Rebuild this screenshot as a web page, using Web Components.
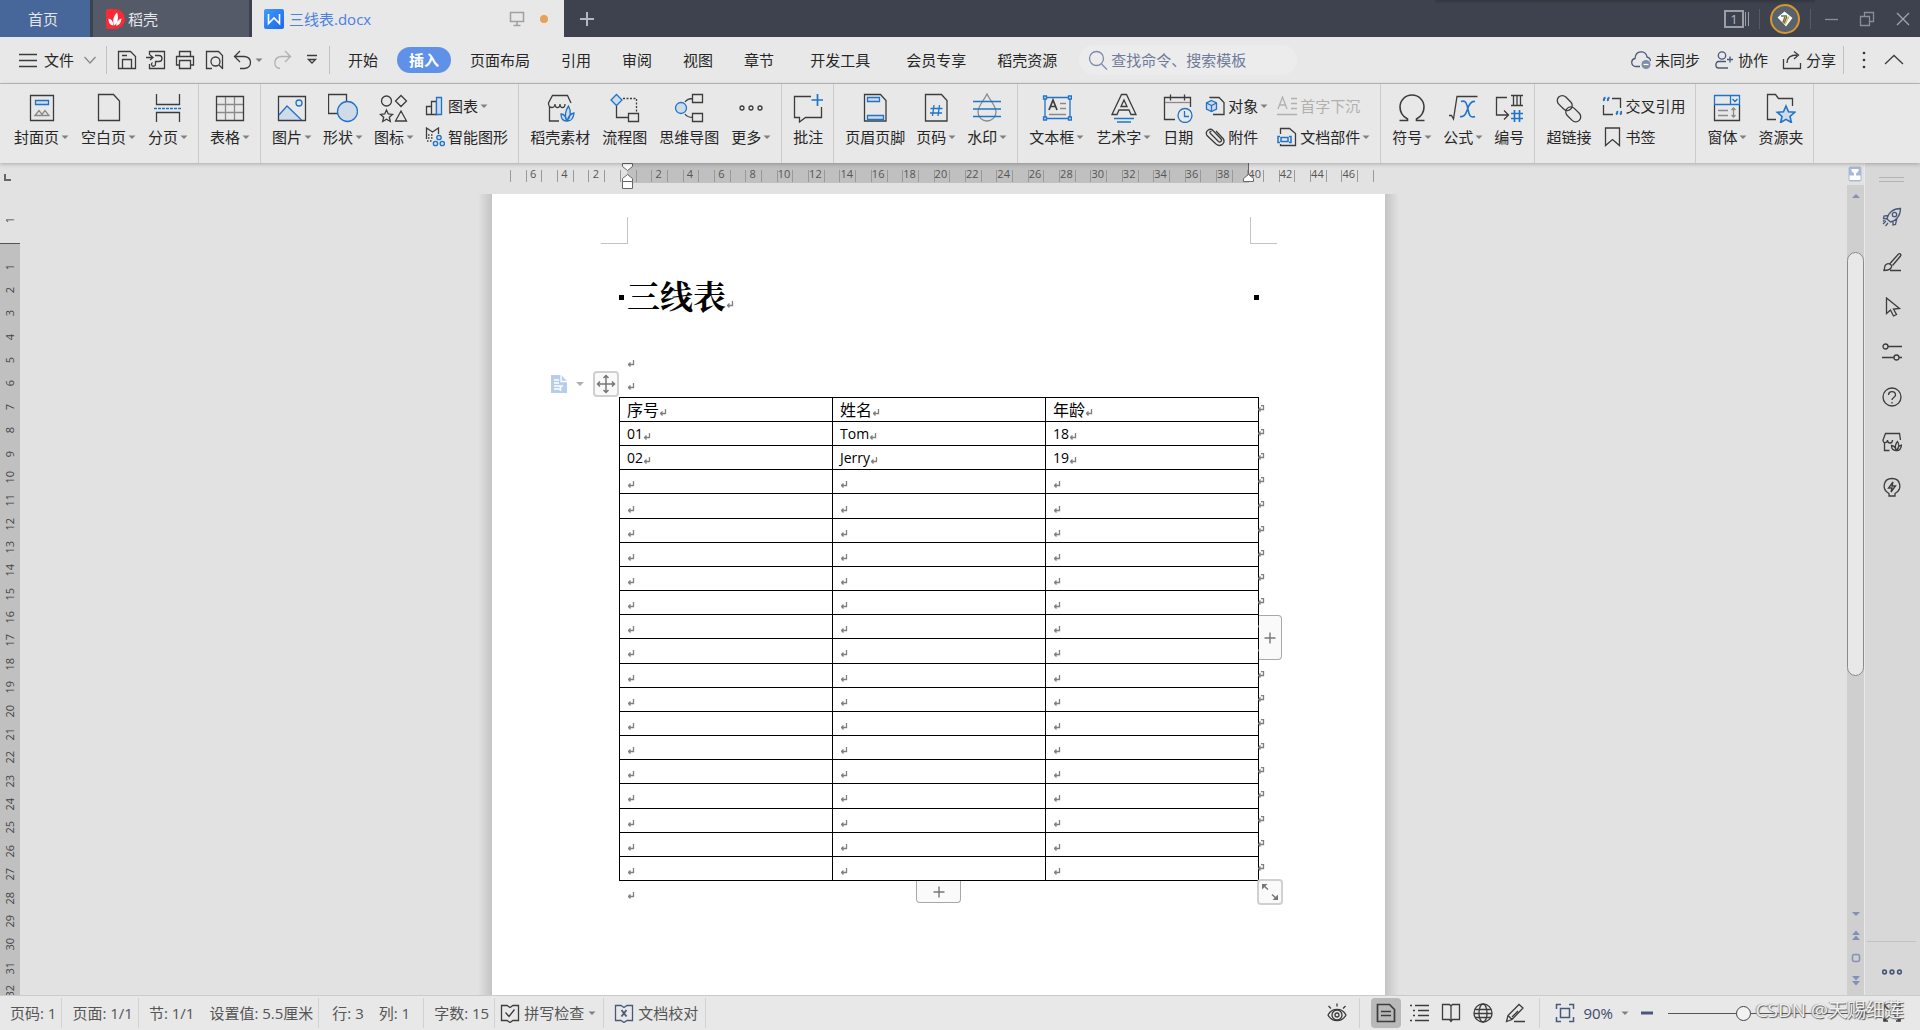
<!DOCTYPE html>
<html lang="zh-CN">
<head>
<meta charset="utf-8">
<title>三线表.docx</title>
<style>
  html, body { margin: 0; height: 100%; overflow: hidden; }
  body { font-family: "Open Sans", "Noto Sans CJK SC", sans-serif; font-size: 15px; line-height: 20px; color: #262626; background: #e2e2e2; }
</style>
</head>
<body>
<office-app></office-app>
<script>
const B = '#1f73c9', L = '#cfdbe8', N = '#4a5878';
/* name: [box size, markup] */
const ICONS = {
  cover: [30, `<path d="M3.5 2.5h23v25h-23z"/><path stroke="${B}" fill="${L}" d="M8.5 7.5h13v4h-13z"/><path stroke="#888" d="M8 22.5l4-5 3 4 3-4 4 5z"/>`],
  blank: [30, `<path d="M4.5 1.5h15l6 6.5v19.500h-21z"/>`],
  pbreak: [30, `<path d="M3.500 1v10.500h23V1M3.500 29V19.500h23V29"/><path stroke="${B}" stroke-dasharray="3 1" d="M1 15.500h28"/>`],
  table: [30, `<path stroke="#8a8a8a" d="M10.500 4v23M19.500 4v23M2 11.500h26M2 19.500h26"/><path d="M1.500 3.500h27v24h-27z"/>`],
  picture: [30, `<path fill="${L}" stroke="none" d="M2 22l8-9 14.500 14.500H2z"/><path d="M1.500 3.500h27v24h-27z"/><g stroke="${B}"><path d="M2 22l8-9 14.500 14"/><circle cx="22" cy="10" r="3"/></g>`],
  shapes: [30, `<path d="M.5 1.500h18v19h-18z"/><circle cx="19.500" cy="18.500" r="10" fill="${L}" stroke="${B}"/>`],
  glyphs: [30, `<circle cx="7.500" cy="8" r="5"/><path d="M22 2.500L27.500 8 22 13.500 16.500 8zM7.500 17l1.800 4 4.200.4-3.200 2.800 1 4.300-3.800-2.300-3.800 2.300 1-4.300-3.200-2.800 4.200-.4zM22 18l5.500 10h-11z"/>`],
  chart: [20, `<path d="M1.500 10.500h5v8h-5zM6.500 5.500h5v13h-5z"/><path stroke="${B}" fill="${L}" d="M11.500 1.500h5v17h-5z"/>`],
  smart: [20, `<path d="M1.500 12V1l6 4 6-4v6"/><path stroke-dasharray="1.500 1.500" d="M3 8h6M3 11h5M2 14h5"/><g stroke="${B}" fill="${L}"><circle cx="14" cy="10.500" r="2.200"/><circle cx="10.500" cy="16.500" r="2.200"/><circle cx="17.300" cy="16.500" r="2.200"/></g>`],
  store: [30, `<path d="M14 28H4.500V13M26 10L22.500 2.500h-15L3.500 10c0 3.500 1.500 4.500 3.200 4.500S10 13 10 11c0 2 1 3.500 2.500 3.500S15 13 15 11c0 2 1 3.500 2.500 3.500S20 13 20 11"/><path stroke="${B}" fill="${L}" d="M22 28c-3-4-1.500-11 1.500-15 3 5 2 12-1.500 15zM21.500 28c-4 0-5.500-3-5.500-7 3 0 5.500 3 5.500 7zM22.500 28c4 0 6-3 6.500-8-4 1-6 4-6.500 8z"/>`],
  flow: [30, `<path stroke="${B}" fill="${L}" d="M6.500 1.500L12 7 6.500 12.500 1 7z"/><path d="M6.500 13v11.500H18M18.500 20.500h10v8h-10z"/><path stroke-dasharray="2 1.500" d="M13 5.500h13.500V20"/>`],
  mind: [30, `<circle cx="7" cy="15" r="5.500" stroke="${B}" fill="${L}"/><path d="M11 9c2-3 4-3.500 8-3.500M11 21c2 3 4 3.500 8 3.500M18.500 1.500h10v8h-10zM18.500 20.500h10v8h-10z"/>`],
  more: [30, `<circle cx="6" cy="15" r="2"/><circle cx="15" cy="15" r="2"/><circle cx="24" cy="15" r="2"/>`],
  comment: [30, `<path d="M18 3.500H1.500v21h5V29l6-4.500h16V14"/><path stroke="${B}" stroke-width="1.700" d="M24.500 1v12M18.500 7h12"/>`],
  header: [30, `<path d="M4.500 1.500h16l5.500 6v20.500h-21.500z"/><path stroke="${B}" fill="${L}" d="M7.500 4.500h12v4h-12zM7.500 22.500h16v4h-16z"/>`],
  pagenum: [30, `<path d="M4.500 1.500h16l5.500 6v20.500h-21.500z"/><path stroke="${B}" d="M13 12l-1.500 11M18.500 12L17 23M9.500 15.500h12M9 20h12"/>`],
  watermark: [30, `<path stroke="#8a8a8a" d="M15 1c4 8 9 12 9 18a9 9 0 0 1-18 0C6 13 11 9 15 1z"/><path stroke="${B}" stroke-width="1.700" d="M1 8.500h28M1 16h28M1 23.500h28"/>`],
  textbox: [30, `<path stroke="${B}" d="M3 4.500h25v21H3z"/><path fill="${L}" stroke="${B}" d="M1.500 3h3v3h-3zM26.500 3h3v3h-3zM1.500 24h3v3h-3zM26.500 24h3v3h-3z"/><path stroke-width="1.700" d="M7 17l4-10 4 10M8.500 13.500h5"/><path stroke="#8a8a8a" d="M18 10.500h6M18 15.500h6M7 21.500h17"/>`],
  wordart: [30, `<path d="M3 21.500L12.500 1.500h5l9.500 20h-5l-2-4.500h-10l-2 4.500zM15 7l-3 6.500h6z"/><path stroke="${B}" d="M5 25.500h20M8 29h14"/>`],
  date: [30, `<path d="M12 26.500H1.500v-22h26V14M7.500 1.500v6M21.500 1.500v6"/><path stroke="#8a8a8a" d="M2 9.500h25"/><circle cx="22" cy="22.500" r="7" stroke="${B}"/><path stroke="${B}" d="M21.500 18v5.500H26"/>`],
  object: [20, `<path d="M5 2V1.500h9l5 5v12H8"/><g stroke="${B}"><path fill="${L}" d="M6.500 4.500l5 2.500v6l-5 2.500-5-2.500V7z"/><path d="M1.500 7l5 2.500 5-2.500M6.500 9.500v6"/></g>`],
  clip: [20, `<path d="M5 6l8.500 8.500c1.500 1.500 4-.5 2.500-2.500L8 3.500C5 .5-.5 4 2 8.500l9 8.500c5 4 10-1.500 7-5.500L11 4M5 6c-.5-1 .5-2 1.500-1.500"/>`],
  dropcap: [20, `<g stroke="#b0b0b0"><path d="M1 13L5.500 1 10 13M2.500 9h6M14 2.500h6M14 7.500h6M14 12.500h6M0 18.500h20"/></g>`],
  parts: [20, `<path d="M3.500 7V1.500h9l6 5v12h-15V17"/><path stroke="${B}" d="M3 9.500H1v6h2M12 9.500h2v6h-2M4 10.500h7v4H4z" stroke-width="1.500"/>`],
  omega: [30, `<path stroke-width="1.600" d="M2.500 27.500h8V26C6 23.500 3 19.500 3 14a12 12 0 0 1 24 0c0 5.500-3 9.500-7.500 12v1.500h8"/>`],
  formula: [30, `<path d="M1 22.500h2.500l2 3.500L9 3.500h20.500"/><path stroke="${B}" stroke-width="1.600" d="M13 8.500c5-2 6 3 7 8s2 9 7 7M27 8.500c-5-1-7 6-8 9s-3 7-7 6"/>`],
  number: [30, `<path d="M13 4.500H2.500V22H14M10 17.500l4.500 4.500-4.500 4.500"/><path d="M17 2.500h12M17 12.500h12M19.500 3v9M23 3v9M26.500 3v9"/><path stroke="${B}" stroke-width="1.700" d="M20.500 17v12M25.500 17v12M17 20.500h12M17 25.500h12"/>`],
  link: [30, `<g transform="rotate(45 15 15)"><rect x="0" y="9.500" width="17" height="10" rx="5"/><rect x="14" y="11.500" width="17" height="10" rx="5"/></g>`],
  xref: [20, `<path d="M10 2.500h8.500V12M1.500 9v9.500H11"/><g stroke="${B}" stroke-width="2"><path d="M2 5c-.5-2 0-3 1.500-3.500M6 5c-.5-2 0-3 1.500-3.500M14 18.500c1.500-1 1.500-2 1.200-3.500M18 18.500c1.500-1 1.500-2 1.200-3.500"/></g>`],
  bookmark: [20, `<path d="M3.500 1v17.500l7-6 7 6V1z"/>`],
  form: [30, `<path d="M2.500 12v15.500h25V12"/><path stroke="${B}" d="M2.500 2.500h25v9h-25zM18.500 2.500v9M20.500 6l2.500 2.500L25.500 6"/><path stroke="#8a8a8a" d="M6 17.500h10M6 22.500h10M21.500 15v9M19.500 17l2-2 2 2M19.500 22l2 2 2-2"/>`],
  folder: [30, `<path d="M10 26.500H1.500v-25h8l3 4h14V13"/><path stroke="${B}" stroke-width="1.600" fill="${L}" d="M20 13l2.500 5.800 6.200.5-4.700 4.200 1.400 6L20 26.400l-5.400 3.100 1.400-6-4.700-4.200 6.200-.5z"/>`],
  menu: [20, `<path d="M1 4.500h18M1 10.500h18M1 16.500h18"/>`],
  chevdown: [12, `<path stroke="#888" d="M.5 3l5.500 6 5.500-6"/>`],
  chevup: [20, `<path d="M1 14l9-8.500L19 14"/>`],
  save: [20, `<path d="M1.500 1.500h12l5 5v12h-17z"/><path d="M5.500 18.500V9.500h9v9M5 5.500h5"/>`],
  pdf: [20, `<path d="M3.500 5V1.500h15v17h-15V14M0 7.500h6M4 5l3 2.500L4 10"/><path d="M9 5.500h4a2.500 2.500 0 0 1 0 6H9.500V14a2 2 0 1 1-3-1.500"/>`],
  print: [20, `<path d="M4.500 6V1.500h11V6M4.500 15h-3V6.500h17V15h-3M4.500 10.500h11v8h-11z"/>`],
  preview: [20, `<path d="M8 18.500H2.500v-17h12l4 4V18"/><circle cx="11.500" cy="11.500" r="4.500"/><path d="M15 15l4 4"/>`],
  undo: [20, `<path d="M7 1L1.500 6.500 7 12M2 6.500h9.500c8 1 8 11 0 12H7"/>`],
  redo: [20, `<path stroke="#b0b0b0" d="M13 1l5.500 5.500L13 12M18 6.500H9c-8 1-8 11-1 12"/>`],
  custom: [12, `<path d="M1 1.500h10M2.500 5.500L6 9l3.500-3.500z"/>`],
  search: [20, `<circle cx="8.500" cy="8.500" r="7" stroke="#7f8bab"/><path stroke="#7f8bab" d="M13.500 14l5.500 5.500"/>`],
  cloud: [20, `<path stroke="${N}" d="M9 16.500H5C-.5 16-.5 9.500 4 8.500 4.500 0 15 0 16 7c2.500.5 3.500 2 3.500 4"/><circle cx="15" cy="14.500" r="4.500" fill="#7f8bab" stroke="none"/><path stroke="#fff" d="M12.500 14.500h5"/>`],
  people: [20, `<g stroke="${N}"><circle cx="8" cy="5.500" r="3.700"/><path d="M12 11.500H4.500c-3.500 0-3.500 6.500 0 6.500H14M16 6.500v6M13 9.500h6"/></g>`],
  share: [20, `<path d="M1.500 9v9.500h17V13M5 13c0-5 3-8 10-8M12 1.500L16.500 5 12 9"/>`],
  kebab: [20, `<g fill="#333" stroke="none"><circle cx="10" cy="3" r="1.300"/><circle cx="10" cy="10" r="1.300"/><circle cx="10" cy="17" r="1.300"/></g>`],
  docer: [20, `<path fill="#fa2a35" stroke="none" d="M1 2q0-2 2-2h7a10 10 0 0 1 0 20H3q-2 0-2-2z"/><path fill="#fff" stroke="none" d="M9.500 16.500c-2.500-4-1-10 2.500-13 2 5 1 10-2.500 13zM8.500 16.500c-3.500 0-5-3-5-7 3.500 1 5 4 5 7zM11 16.500c3 0 5-2.500 5.500-7-3.500 1-5 4-5.500 7z"/>`],
  writer: [20, `<defs><linearGradient id="w" x2="1" y2="1"><stop stop-color="#3d9bff"/><stop offset="1" stop-color="#1b68e8"/></linearGradient></defs><rect width="20" height="20" rx="2" fill="url(#w)" stroke="none"/><path stroke="#fff" stroke-width="1.600" d="M4.500 5v9.500L10 9l5.500 5.500V5"/>`],
  screen: [16, `<path stroke="#a0a0a0" stroke-width="1.500" d="M1.500 1.500h13v9h-13zM8 11v3.500M4.500 14.500h7"/>`],
  plus: [16, `<path stroke="#b4b7bf" stroke-width="2" d="M8 1v14M1 8h14"/>`],
  minimize: [16, `<path stroke="#8b8d98" d="M2 8.500h13"/>`],
  restore: [16, `<path stroke="#8b8d98" stroke-width="1.300" d="M1.500 5.500h9v9h-9zM5.500 5V1.500h9v9H11"/>`],
  close: [16, `<path stroke="#a2a4ad" stroke-width="1.300" d="M2 2l12 12M14 2L2 14"/>`],
  avatar: [30, `<circle cx="15" cy="15" r="14" fill="#59616d" stroke="#d9982d" stroke-width="2"/><path fill="#fff" stroke="none" d="M7.500 13.500L14.500 7.500l8 6.500-6.500 8.500-3-3.500z"/><path stroke="#3b8d50" stroke-width="1.600" d="M11 12h6M17 12.500l-3 7"/><path stroke="#d6452f" stroke-width="1.500" d="M15 12.500l-2 6"/><path stroke="#e2b13c" stroke-width="1.300" d="M19 12.500l-4 8"/>`],
  rocket: [20, `<g stroke="${N}"><path d="M5 12C6 6 11 1.500 18.500 1.500 18.500 9 14 14 8.500 15zM6 8.500L2 9l-.5 2.500 4 .500M11 14v4l2.500-.5L15 11"/><circle cx="12.500" cy="7.500" r="2.200"/><path d="M4 14l-3 3M6 16l-2.500 3M2.500 13L1 14.500"/></g>`],
  brush: [20, `<path d="M8 11.500L16.500 2c1.500-1 3 .5 2 2L10.500 13.500M1.500 18.500c2-1 0-4 2.500-6 3-2 6 0 5.500 2.500-1 3-5 3.500-8 3.500zM8 18.500h11"/>`],
  pointer: [20, `<path d="M4.500 1v15.500l4-3.500 3 6 3-1.500-3-5.500 6-.5z"/>`],
  sliders: [20, `<circle cx="3.500" cy="4.500" r="2.500"/><path d="M6 4.500h14M0 15.500h12M17 15.500h3"/><circle cx="14.500" cy="15.500" r="2.500"/>`],
  help: [20, `<circle cx="10" cy="10" r="9"/><path d="M6.500 8c0-4.500 7-4.500 7 0 0 2.500-3.500 2.500-3.500 5M10 15v1.500"/>`],
  store2: [20, `<path d="M7.500 18.500h-5V10M18.500 8l-1-6.500h-14L1 8c0 4 4.500 3 4.500 0 0 4 5 4 5 0"/><path d="M14.500 18.500c-2-3-1-7 1-9 2 3 1.500 7-1 9zM14 18.500c-3 0-4.500-2-4.500-5 2.500.500 4.500 2.500 4.500 5zM15 18.500c3 0 4-2 4.500-5.500-3 1-4 3-4.500 5.500z"/>`],
  bulb: [20, `<path d="M7 16.500C-1 12 1.500 1.500 10 1.500S21 12 13 16.500v2.500H7z"/><path d="M11 5l-4.500 6H10l-1 4 4.500-6H10z"/>`],
  dots: [20, `<g stroke="${N}" stroke-width="1.600"><circle cx="2.500" cy="10" r="1.900"/><circle cx="10" cy="10" r="1.900"/><circle cx="17.500" cy="10" r="1.900"/></g>`],
  spell: [20, `<path d="M7 2.500H1.500v15H7l3 2 3-2h5.500v-15H13l-3 2zM5.500 9.500l3.500 4 5.500-7"/>`],
  proof: [20, `<g stroke="${N}"><path d="M7 2.500H1.500v15H7l3 2 3-2h5.500v-15H13l-3 2z"/><path stroke-width="1.800" d="M7.500 7l5 6.500M12.500 7l-5 6.500"/></g>`],
  eye: [20, `<path d="M1 12c4-7.500 14-7.500 18 0-4 7.500-14 7.500-18 0z"/><circle cx="10" cy="12" r="5"/><circle cx="10" cy="12" r="2"/><path d="M10 .5v3M1.500 3L4 5.500M18.500 3L16 5.500"/>`],
  pageview: [20, `<path stroke-width="1.700" d="M1.500 1.500h12l5 5v12h-17z"/><path stroke-width="1.700" d="M5 8.500h10M5 12.500h10"/>`],
  outline: [20, `<path d="M1 2.500h2M6 2.500h14M4 7.500h2M9 7.500h11M4 12.500h2M9 12.500h11M1 17.500h2M6 17.500h14"/>`],
  book: [20, `<path d="M1.500 1.500h7l1.500 1.500 1.500-1.500h7v15h-7L10 18.500 8.500 16.500h-7zM10 3v15"/>`],
  globe: [20, `<circle cx="10" cy="10" r="9"/><ellipse cx="10" cy="10" rx="4" ry="9"/><path d="M2 6.500h16M1 10.500h18M2 14.500h16"/>`],
  pen: [20, `<path d="M1.500 18.500L3 12.500 14 1.500l4 3.500L7 16.500zM3 12.500l4 4M9 18.500h11M13 8l-6 6"/>`],
  fit: [20, `<g stroke="${N}" stroke-width="1.500"><path d="M1.500 6V1.500H6M14 1.500h4.500V6M18.500 14v4.500H14M6 18.500H1.500V14M5.500 5.500h9v9h-9z"/></g>`],
  minus: [12, `<path stroke="${N}" stroke-width="3" d="M0 6h12"/>`],
  zoomin: [12, `<path stroke="${N}" stroke-width="2.500" d="M0 6h12M6 0v12"/>`],
  full: [20, `<path stroke-width="1.600" d="M2 6V2h4M14 2h4v4M18 14v4h-4M6 18H2v-4M2.500 2.500l5 5M17.500 2.500l-5 5M17.500 17.500l-5-5M2.500 17.500l5-5"/>`],
  ret: [8, `<path stroke="#808080" d="M5.500 1v4.500H.5M2.500 3.500l-2 2 2 2"/>`],
  rowend: [8, `<path stroke="#808080" d="M3 .500h2.500v4H1M2.500 2.500l-2 2 2 2"/>`],
  move: [20, `<path stroke="#777" stroke-width="1.500" d="M10 1v18M1 10h18M7.500 4L10 1.500 12.500 4M7.500 16l2.500 2.500 2.500-2.500M4 7.500L1.500 10 4 12.500M16 7.500l2.500 2.500-2.500 2.500"/>`],
  diag: [20, `<path fill="#777" stroke="none" d="M2 2h5.500L2 7.500zM18 18h-5.500L18 12.500z"/><path stroke="#777" stroke-width="1.500" d="M3 3l5 4.500M17 17l-5-4.500"/>`],
  add: [12, `<path stroke="#777" stroke-width="1.400" d="M6 .5v11M.5 6h11"/>`],
  paste: [20, `<path fill="#b8cdea" stroke="none" d="M2 1h10l6 6v12H2z"/><path stroke="#fff" d="M12 1v6.500h6M5 6h5M5 9h5M5 12h9M5 15h6"/><path stroke="#fff" stroke-width="1.500" d="M11.500 12v5"/>`],
  nib: [16, `<rect x=".5" y=".5" width="13" height="15" rx="2" fill="#a9b8d6" stroke="none"/><path fill="#fff" stroke="none" d="M3.500 3h7v2L8 7.500v2h4.500V14h-11V9.500H6v-2L3.500 5z"/>`],
  up: [8, `<path fill="#8291b4" stroke="none" d="M0 6l4-4 4 4z"/>`],
  down: [8, `<path fill="#8291b4" stroke="none" d="M0 2h8L4 6z"/>`],
  dblup: [12, `<path fill="#8291b4" stroke="none" d="M2 6l4-4.500L10 6zM2 11l4-4.500 4 4.500z"/>`],
  dbldown: [12, `<path fill="#8291b4" stroke="none" d="M2 1h8L6 5.500zM2 6h8l-4 4.500z"/>`],
  ball: [12, `<rect x="2.500" y="2.500" width="7" height="7" rx="2" stroke="#8291b4" stroke-width="1.500"/>`],
  caret: [8, `<path fill="#808080" stroke="none" d="M.5 2.500h7L4 6z"/>`],
  caretlight: [8, `<path fill="#b0b0b0" stroke="none" d="M0 2h8L4 6z"/>`],
  tabstop: [8, `<path stroke="#666" stroke-width="2" d="M1 0v6h6"/>`]
};

const define = (name, html) => customElements.define(name, class extends HTMLElement {
  connectedCallback() {
    if (this.shadowRoot) return;
    const root = this.attachShadow({ mode: 'open' });
    const t = document.createElement('template');
    t.innerHTML = typeof html === 'function' ? html(this) : html;
    root.append(t.content.cloneNode(true));
  }
});
const RESET = `button{font:inherit;color:inherit;background:none;border:0;padding:0;margin:0;display:flex;align-items:center;white-space:nowrap}*{box-sizing:border-box}`;
const ic = n => `<app-icon name="${n}"></app-icon>`;
const btn = (n, label) => `<button aria-label="${label}">${ic(n)}</button>`;

define('app-icon', el => {
  const [s, m] = ICONS[el.getAttribute('name')];
  return `<style>:host{display:block;flex:none;width:${s}px;height:${s}px}svg{display:block}</style>
  <svg width="${s}" height="${s}" viewBox="0 0 ${s} ${s}" fill="none" stroke="#3c3c3c" stroke-width="1.300" aria-hidden="true">${m}</svg>`;
});

define('title-bar', `<style>${RESET}
  :host{display:flex;height:37px;background:linear-gradient(#33363f,#3e424e) right 105px top/380px 4px no-repeat #3e424e;color:#e4e6ea;align-items:stretch}
  .home{background:#47669a;width:90px;justify-content:center;padding-right:4px;margin-right:3px}
  .docer{background:#555a69;width:156px;padding-left:12px;gap:3px;margin-right:3px}
  .doc{background:#e8e8e8;color:#4a80e0;width:312px;padding:0 16px 0 12px;gap:5px}
  .doc span{flex:1;text-align:left}
  .doc i{width:8px;height:8px;border-radius:4px;background:#e8a158;margin-left:10px}
  .new{margin-left:15px}
  .win{margin-left:auto;display:flex;align-items:center;padding-right:9px}
  .count{border:2px solid #9b9da7;width:20px;height:18px;justify-content:center;font-size:13px;line-height:14px;color:#b4b7bf}
  .stack{width:6px;height:14px;background:linear-gradient(90deg,transparent 1px,#9b9da7 1px,#9b9da7 2px,transparent 2px,transparent 4px,#9b9da7 4px,#9b9da7 5px,transparent 5px);margin-right:9px}
  hr{width:1px;height:20px;border:0;background:#565a66;margin:0}
  .me{margin:0 10px}
  .ctl{display:flex;gap:20px;margin-left:12px}
</style>
<button class="home">首页</button>
<button class="docer">${ic('docer')}稻壳</button>
<button class="doc">${ic('writer')}<span>三线表.docx</span>${ic('screen')}<i></i></button>
<button class="new" aria-label="新建">${ic('plus')}</button>
<div class="win"><button class="count">1</button><div class="stack"></div><hr><button class="me" aria-label="账号">${ic('avatar')}</button><hr>
<div class="ctl">${btn('minimize', '最小化')}${btn('restore', '还原')}${btn('close', '关闭')}</div></div>`);

define('menu-bar', `<style>${RESET}
  :host{display:flex;box-sizing:border-box;height:47px;align-items:center;background:#e8e8e8;border-bottom:1px solid #bdbdbd;padding:0 16px 0 18px}
  hr{width:1px;height:28px;border:0;background:#c2c2c2;margin:0}
  .file{gap:6px}.file app-icon:last-child{margin:0 10px 0 4px}
  .quick{display:flex;align-items:center;gap:9px;padding:0 11px 0 10px}
  .undo{gap:2px}.quick .redo{margin-right:5px}
  nav{display:flex;gap:12px;padding-left:6px}
  nav div{display:flex;gap:7px}
  nav button{padding:0 12px;height:26px}
  nav .on{background:#6091e8;color:#fff;font-weight:bold;border-radius:13px}
  label{display:flex;align-items:center;gap:3px;width:218px;height:30px;border-radius:15px;background:#ececec;margin-left:10px;padding-left:9px}
  input{font:inherit;border:0;background:none;outline:0;padding:0;width:180px}
  input::placeholder{color:#707a99;opacity:1}
  .right{display:flex;align-items:center;margin-left:auto;gap:14px}
  .right button{gap:4px}.tail{display:flex;align-items:center;gap:10px;margin-left:7px}
</style>
<button class="file">${ic('menu')}文件${ic('chevdown')}</button><hr>
<div class="quick">${btn('save', '保存')}${btn('pdf', '输出为PDF')}${btn('print', '打印')}${btn('preview', '打印预览')}<button class="undo" aria-label="撤消">${ic('undo')}${ic('caret')}</button><button class="redo" aria-label="恢复">${ic('redo')}</button>${btn('custom', '自定义')}</div><hr>
<nav><div><button>开始</button><button class="on">插入</button><button>页面布局</button><button>引用</button><button>审阅</button><button>视图</button><button>章节</button></div>
<div><button>开发工具</button></div><div><button>会员专享</button><button>稻壳资源</button></div></nav>
<label>${ic('search')}<input type="search" placeholder="查找命令、搜索模板" aria-label="查找命令"></label>
<div class="right"><button>${ic('cloud')}未同步</button><button>${ic('people')}协作</button><button>${ic('share')}分享</button></div>
<div class="tail"><hr>${btn('kebab', '更多')}${btn('chevup', '折叠')}</div>`);

/* Ribbon pieces */
define('ribbon-group', `<style>
  :host{display:flex;gap:var(--gap,11px);padding:5px 10px 5px 11px;border-right:1px solid #cbcbcb;box-sizing:border-box}
  :host([first]){padding-left:14px}
</style><slot></slot>`);
define('ribbon-pair', `<style>:host{display:flex;flex-direction:column;gap:1px;padding-top:2px;align-items:flex-start}</style><slot></slot>`);
define('ribbon-button', el => `<style>${RESET}
  :host{display:block}
  button{flex-direction:column;padding-top:4px;gap:4px}
  button:disabled{color:#b0b0b0}
  span{display:flex;align-items:center}
  span app-icon{margin-left:2px}
  :host([small]) button{flex-direction:row;height:30px;padding:0;gap:3px}
</style><button ${el.hasAttribute('disabled') ? 'disabled' : ''}>${ic(el.getAttribute('icon'))}<span><slot></slot>${el.hasAttribute('menu') ? ic('caret') : ''}</span></button>`);

const rb = (i, t, a = '') => `<ribbon-button icon="${i}" ${a}>${t}</ribbon-button>`;
define('ribbon-bar', `<style>
  :host{display:flex;height:79px;background:#e8e8e8;position:relative;z-index:2;box-shadow:0 1px 4px rgba(0,0,0,.25)}
  .g12{--gap:12px}.cols{display:flex;gap:9px}
</style>
<ribbon-group first class="g12">${rb('cover', '封面页', 'menu')}${rb('blank', '空白页', 'menu')}${rb('pbreak', '分页', 'menu')}</ribbon-group>
<ribbon-group>${rb('table', '表格', 'menu')}</ribbon-group>
<ribbon-group>${rb('picture', '图片', 'menu')}${rb('shapes', '形状', 'menu')}${rb('glyphs', '图标', 'menu')}<ribbon-pair>${rb('chart', '图表', 'small menu')}${rb('smart', '智能图形', 'small')}</ribbon-pair></ribbon-group>
<ribbon-group class="g12">${rb('store', '稻壳素材')}${rb('flow', '流程图')}${rb('mind', '思维导图')}${rb('more', '更多', 'menu')}</ribbon-group>
<ribbon-group>${rb('comment', '批注')}</ribbon-group>
<ribbon-group>${rb('header', '页眉页脚')}${rb('pagenum', '页码', 'menu')}${rb('watermark', '水印', 'menu')}</ribbon-group>
<ribbon-group class="g12">${rb('textbox', '文本框', 'menu')}${rb('wordart', '艺术字', 'menu')}${rb('date', '日期')}<div class="cols"><ribbon-pair>${rb('object', '对象', 'small menu')}${rb('clip', '附件', 'small')}</ribbon-pair><ribbon-pair>${rb('dropcap', '首字下沉', 'small disabled')}${rb('parts', '文档部件', 'small menu')}</ribbon-pair></div></ribbon-group>
<ribbon-group>${rb('omega', '符号', 'menu')}${rb('formula', '公式', 'menu')}${rb('number', '编号')}</ribbon-group>
<ribbon-group>${rb('link', '超链接')}<ribbon-pair>${rb('xref', '交叉引用', 'small')}${rb('bookmark', '书签', 'small')}</ribbon-pair></ribbon-group>
<ribbon-group>${rb('form', '窗体', 'menu')}${rb('folder', '资源夹')}</ribbon-group>`);

/* 55 one-character cells; every second one carries its number */
define('h-ruler', () => {
  let c = '';
  for (let k = 0; k < 55; k++) { const v = Math.abs(k - 7); c += `<i>${k % 2 && v ? `<b>${v}</b>` : ''}</i>`; }
  return `<style>*{box-sizing:border-box}
  :host{display:block;position:relative;width:893px;height:20px;background:linear-gradient(90deg,transparent 135px,#c0c0c0 135px,#c0c0c0 757px,transparent 757px)}
  .t{display:flex;padding:7px 11px 0 18px;font-size:11px;line-height:12px;color:#555}
  i{flex:1 1 0;min-width:0;height:12px;border-left:1px solid #999;font-style:normal;display:flex;justify-content:center;align-items:center}
  i:last-child{border-right:1px solid #999}
  b{font-weight:normal;margin:-4px 2px 0 0}
  svg{position:absolute;top:0;overflow:visible}
  .l{left:130px}.r{left:751px}
</style><div class="t">${c}</div>
<svg class="l" width="12" height="27" fill="#fff" stroke="#666"><path d="M.5 .5h10v3l-5 4-5-4zM5.500 11.500l5 4v3h-10v-3zM.5 18.500h10v7h-10z"/></svg>
<svg class="r" width="12" height="20" fill="#fff" stroke="#666"><path d="M5.500 0v12"/><path d="M5.500 11.500l5 4v3h-10v-3z"/></svg>`;
});

define('v-ruler', () => {
  let c = '';
  for (let k = 1; k <= 32; k++) c += `<i><b>${k}</b></i>`;
  return `<style>*{box-sizing:border-box}
  :host{display:flex;flex-direction:column;min-height:0;overflow:hidden;font-size:11px;line-height:12px;color:#444}
  i{display:flex;align-items:center;justify-content:center;font-style:normal;flex:1 1 0;min-height:0}
  b{font-weight:normal;writing-mode:vertical-rl;transform:rotate(180deg)}
  .top{flex:0 0 49px;padding-top:4px}
  .body{flex:1;min-height:0;display:flex;flex-direction:column;background:#c0c0c0;border-top:1px solid #555;padding-top:11px;margin-bottom:-8px}
</style><i class="top"><b>1</b></i><div class="body">${c}</div>`;
});

define('doc-table', () => {
  const data = [['01', 'Tom', '18'], ['02', 'Jerry', '19']];
  while (data.length < 19) data.push(['', '', '']);
  const m = ic('ret'), e = `<app-icon class="end" name="rowend"></app-icon>`;
  const row = (cells, tag) => `<tr>${cells.map((c, i) => `<${tag}><div>${c}${m}</div>${i === 2 ? e : ''}</${tag}>`).join('')}</tr>`;
  return `<style>*{box-sizing:border-box}
  :host{display:block;position:relative}
  table{border-collapse:collapse;table-layout:fixed;width:100%;height:484px;color:#000}
  th,td{border:1px solid #000;height:24px;padding:0 7px;font-weight:normal;text-align:left;position:relative;font-size:14px;line-height:18px}
  th{font-size:16px}
  div{display:flex;align-items:center;height:20px}
  div app-icon{margin:5px 0 0 1px}
  .end{position:absolute;left:100%;top:7px}
  button{position:absolute;display:flex;align-items:center;justify-content:center;padding:0;background:#fafafa;border:1px solid #a8a8a8;border-radius:4px}
  .move,.size{width:26px;height:26px;border:2px solid #d0d0d0}
  .move{right:100%;top:-26px}.size{left:calc(100% - 2px);bottom:-24px}
  .col{left:100%;top:218px;width:23px;height:45px;border-left:0;border-radius:0 4px 4px 0}
  .row{left:calc(50% - 23px);top:100%;width:45px;height:22px;border-top:0;border-radius:0 0 4px 4px}
  .opt{right:calc(100% + 35px);top:-23px;border:0;background:none;gap:7px}
</style><table><thead>${row(['序号', '姓名', '年龄'], 'th')}</thead><tbody>${data.map(r => row(r, 'td')).join('')}</tbody></table>
<button class="opt" aria-label="粘贴选项">${ic('paste')}${ic('caretlight')}</button>
<button class="move" aria-label="移动表格">${ic('move')}</button><button class="size" aria-label="调整大小">${ic('diag')}</button>
<button class="col" aria-label="添加列">${ic('add')}</button><button class="row" aria-label="添加行">${ic('add')}</button>`;
});

define('doc-page', `<style>*{box-sizing:border-box}
  :host{display:block;width:893px;background:#fff;padding:23px 126px 0 127px;position:relative;box-sizing:border-box}
  :host::before,:host::after{content:"";position:absolute;top:0;bottom:0;width:14px}
  :host::before{right:100%;background:linear-gradient(270deg,#c4c4c4,#e2e2e2)}
  :host::after{left:100%;background:linear-gradient(90deg,#c4c4c4,#e2e2e2)}
  .corners{display:flex;justify-content:space-between;margin:0 -18px 33px}
  .corners i{width:27px;height:27px;border:solid #c4c4c4;border-width:0 1px 1px 0}
  .corners i+i{border-width:0 0 1px 1px}
  header{display:flex;align-items:center;height:40px;color:#000}
  header b{width:5px;height:5px;background:#000}
  header b:last-child{margin-left:auto}
  h1{margin:0 1px 0 3px;padding-bottom:4px;font:bold 33px/40px "Noto Serif CJK SC","Noto Sans CJK SC",serif}
  header app-icon{margin-top:14px}
  p{margin:0;height:23px;padding:8px 0 0 9px}
  .lead{padding-top:34px}
  .tail{padding-top:2px}
</style>
<div class="corners"><i></i><i></i></div>
<header><b></b><h1>三线表</h1>${ic('ret')}<b></b></header>
<div class="lead"><p>${ic('ret')}</p><p>${ic('ret')}</p></div>
<doc-table></doc-table>
<div class="tail"><p>${ic('ret')}</p></div>`);

define('scroll-rail', `<style>${RESET}
  :host{display:flex;flex-direction:column;width:17px;background:#cfcfcf;align-items:center}
  .nib{background:#e2e2e2;width:100%;height:22px;justify-content:center;align-items:flex-end;padding-bottom:3px}
  .track{flex:1;width:100%;padding:52px 0 0}
  .thumb{height:64.5%;border:1px solid #8a8a8a;border-radius:9px;background:#e8e8e8}
  .up{margin-top:7px}
  .nav{display:flex;flex-direction:column;align-items:center;gap:11px;padding-bottom:8px}
</style><button class="nib" aria-label="标尺">${ic('nib')}</button><button class="up" aria-label="向上">${ic('up')}</button>
<div class="track"><div class="thumb"></div></div>
<div class="nav">${btn('down', '向下')}${btn('dblup', '上一页')}${btn('ball', '选择浏览对象')}${btn('dbldown', '下一页')}</div>`);

define('side-panel', `<style>${RESET}
  :host{display:flex;flex-direction:column;align-items:center;width:56px;background:#d8d8d8;border-left:1px solid #e8e8e8;padding:14px 4px 13px 2px;box-sizing:border-box}
  .grip{width:25px;height:5px;border:solid #b4b4b4;border-width:1px 0;margin-bottom:25px}
  .tools{display:flex;flex-direction:column;gap:25px}
  .foot{margin-top:auto;width:100%;border-top:1px solid #c2c2c2;padding-top:20px;display:flex;justify-content:center}
</style><div class="grip"></div><div class="tools">${btn('rocket', '快捷')}${btn('brush', '样式')}${btn('pointer', '选择')}${btn('sliders', '属性')}${btn('help', '帮助')}${btn('store2', '稻壳')}${btn('bulb', '推荐')}</div>
<div class="foot">${btn('dots', '更多')}</div>`);

define('status-bar', `<style>${RESET}
  :host{display:flex;height:35px;background:#e8e8e8;border-top:1px solid #cbcbcb;color:#555;align-items:center;position:relative;box-sizing:border-box}
  .c{display:flex;align-items:center;gap:15px;height:30px;border-right:1px solid #d2d2d2;padding:0 5px 0 10px}
  .c.w{padding:0 13px}.c.i{padding:0 7px 0 5px}.c.i button{gap:4px}.c.i.p{padding-left:10px}
  .r{display:flex;align-items:center;margin-left:auto;padding-right:18px}
  .v{display:flex;align-items:center;gap:12px;padding:0 14px 0 11px;height:30px;border:solid #d2d2d2;border-width:0 1px;margin-left:12px}
  .v button:first-child{background:#b9b9b9;border-radius:4px;width:30px;height:30px;justify-content:center;margin-right:-4px}
  .z{gap:8px;margin:0 12px 0 15px;color:#3c4a6b}
  input{appearance:none;background:none;width:180px;height:20px;margin:0 8px 0 15px}
  input::-webkit-slider-runnable-track{height:1px;background:#555}
  input::-webkit-slider-thumb{appearance:none;width:15px;height:15px;margin-top:-7px;border:1px solid #444;border-radius:50%;background:#f2f2f2}
  .f{margin-left:14px}
  .mark{position:absolute;right:16px;top:2px;font-size:19px;line-height:24px;color:#f0f0f0;text-shadow:1px 1px 1px #555,-1px 0 1px #999}
</style>
<div class="c"><span>页码: 1</span></div><div class="c"><span>页面: 1/1</span></div><div class="c"><span>节: 1/1</span><span>设置值: 5.5厘米</span></div>
<div class="c w"><span>行: 3</span><span>列: 1</span></div><div class="c"><span>字数: 15</span></div>
<div class="c i"><button>${ic('spell')}拼写检查${ic('caret')}</button></div><div class="c i p"><button>${ic('proof')}文档校对</button></div>
<div class="r">${btn('eye', '护眼模式')}
<div class="v">${btn('pageview', '页面视图')}${btn('outline', '大纲')}${btn('book', '阅读版式')}${btn('globe', 'Web版式')}${btn('pen', '写作模式')}</div>
<button class="z">${ic('fit')}<span>90%</span>${ic('caret')}</button>${btn('minus', '缩小')}
<input type="range" min="0" max="100" value="41" aria-label="显示比例">${btn('zoomin', '放大')}<button class="f" aria-label="全屏">${ic('full')}</button></div>
<span class="mark">CSDN @天赐细莲</span>`);

define('office-app', `<style>
  :host{display:flex;flex-direction:column;height:100vh}
  main{flex:1;min-height:0;display:flex}
  .work{flex:1;min-width:0;display:grid;grid-template:31px minmax(0,1fr)/20px minmax(0,1fr)}
  .corner{padding:11px 0 0 4px}
  .hr,.canvas{display:flex;justify-content:center;align-items:flex-start;padding-left:10px}
  .canvas{align-items:stretch;overflow:hidden}
</style>
<title-bar></title-bar><menu-bar></menu-bar><ribbon-bar></ribbon-bar>
<main><div class="work"><div class="corner">${ic('tabstop')}</div><div class="hr"><h-ruler></h-ruler></div><v-ruler></v-ruler><div class="canvas"><doc-page></doc-page></div></div>
<scroll-rail></scroll-rail><side-panel></side-panel></main>
<status-bar></status-bar>`);
</script>
</body>
</html>
